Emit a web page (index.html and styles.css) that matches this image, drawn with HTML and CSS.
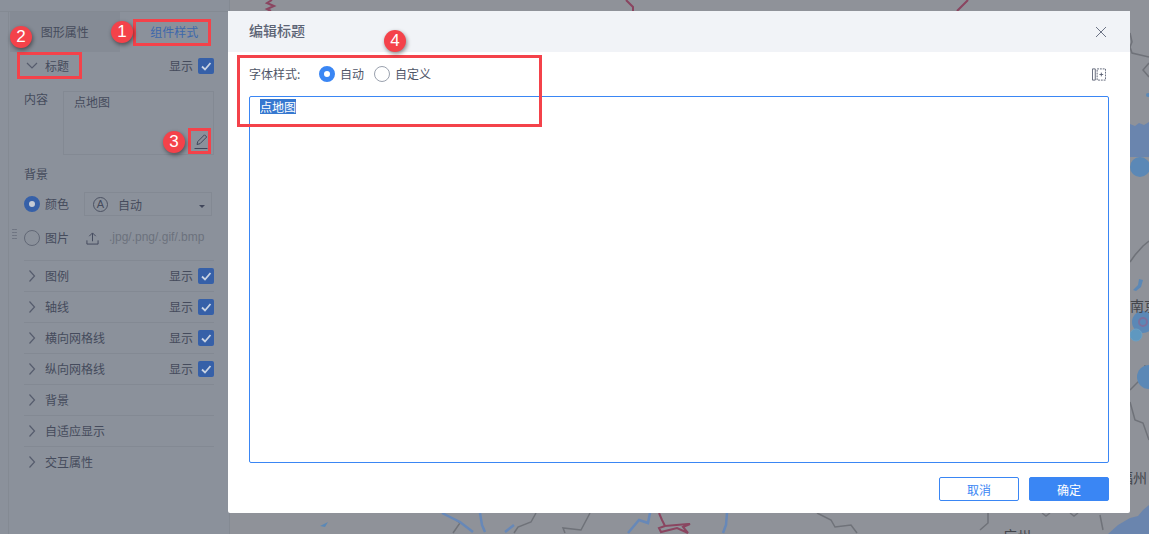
FILE: index.html
```html
<!DOCTYPE html>
<html lang="zh">
<head>
<meta charset="utf-8">
<title>编辑标题</title>
<link rel="stylesheet" href="styles.css">
</head>
<body>
<div class="page">
  <svg class="map" width="1149" height="534" viewBox="0 0 1149 534" fill="none">
    <path class="sea" d="M1130 124l5 2 4 -3 5 2 5 -3v35h-19zM1108 534l10 -9 12 -7 8 -2 5 -6 6 -5v29z"/>
    <g class="border">
      <path d="M1130 33l2 9 -2 5 2 6 17 4M1149 63l-6 7 6 7"/>
      <path d="M1130 262l5 -7 8 -9 6 -5M1130 390l13 -13 2 -12M1130 402l5 18 8 3 6 17"/>
      <path d="M456 520l4 3 -7 10M536 513l-5 9 -13 5 -4 6M590 513l-9 17 -18 -2 2 5M817 513l14 7 4 7 16 -2 6 8M988 513v10l-8 7M1042 513l4 3 4 -3M1070 513l4 3 4 -3M1100 515l3 15"/>
    </g>
    <g class="water">
      <path d="M442 513l18 9 13 10M480 513l2 12 3 7M505 532l9 -7M650 513l-2 10 -9 -3 -11 13M727 513l-1 12 -3 8"/>
    </g>
    <g class="blobs">
      <path d="M320 526l8 -4 -3 5zM1133 290l5 -5 1 -6 4 1 -2 7 -5 4z"/>
      <circle cx="1140" cy="167" r="10"/>
      <circle cx="1143" cy="322" r="11"/>
      <circle cx="1149" cy="377" r="12"/>
      <circle cx="1148" cy="95" r="2"/>
    </g>
    <circle class="blob-small" cx="1136" cy="335" r="6"/>
    <circle class="ring" cx="1143" cy="322" r="4"/>
    <path class="province" d="M272 0l-5 3 7 3 -7 3 4 2M626 0l7 7v4M968 0l-11 11M659 513l3 7 3 6 23 -2 2 0 -7 3 5 6 -11 -5 -16 4 -2 -4 6 -2"/>
    <text class="city" x="1130" y="311">南京</text>
    <text class="city" x="1119" y="483">福州</text>
    <text class="city" x="1003" y="541">广州</text>
  </svg>

  <aside class="panel">
    <div class="panel-top"></div>
    <div class="panel-body">
      <div class="tabs">
        <div class="tab tab-off">图形属性</div>
        <div class="tab tab-on">组件样式</div>
      </div>
      <div class="section-head">
        <svg class="chev" width="12" height="12" viewBox="0 0 12 12"><path d="M1 3l5 5 5 -5"/></svg>
        <span class="sec-name">标题</span>
        <span class="show">显示</span>
        <span class="check"><svg width="16" height="16" viewBox="0 0 16 16"><path d="M4 8.500l3 3 5.500 -6.500"/></svg></span>
      </div>
      <div class="content-row">
        <span class="content-label">内容</span>
        <div class="content-box">点地图
          <svg class="pen" width="14" height="15" viewBox="0 0 14 15"><path d="M3 10.500l.8 -3 6.700 -6.700 2.200 2.200 -6.700 6.700zM.5 14.500h13"/></svg>
        </div>
      </div>
      <div class="bg-title">背景</div>
      <div class="bg-row bg-color">
        <span class="radio radio-on"></span>
        <span class="bg-name">颜色</span>
        <div class="select">
          <span class="a-icon">A</span>
          <span>自动</span>
          <span class="caret"></span>
        </div>
      </div>
      <div class="bg-row bg-image">
        <span class="grip"></span>
        <span class="radio"></span>
        <span class="bg-name">图片</span>
        <svg class="upload" width="13" height="13" viewBox="0 0 14 14"><path d="M7 10V1.500M3.500 4.500L7 1l3.500 3.500M1 9v4h12V9"/></svg>
        <span class="exts">.jpg/.png/.gif/.bmp</span>
      </div>
      <div class="rows">
        <div class="row"><svg class="chev" width="12" height="12" viewBox="0 0 12 12"><path d="M3.500 .5l5 5.500 -5 5.500"/></svg><span class="sec-name">图例</span><span class="show">显示</span><span class="check"><svg width="16" height="16" viewBox="0 0 16 16"><path d="M4 8.500l3 3 5.500 -6.500"/></svg></span></div>
        <div class="row"><svg class="chev" width="12" height="12" viewBox="0 0 12 12"><path d="M3.500 .5l5 5.500 -5 5.500"/></svg><span class="sec-name">轴线</span><span class="show">显示</span><span class="check"><svg width="16" height="16" viewBox="0 0 16 16"><path d="M4 8.500l3 3 5.500 -6.500"/></svg></span></div>
        <div class="row"><svg class="chev" width="12" height="12" viewBox="0 0 12 12"><path d="M3.500 .5l5 5.500 -5 5.500"/></svg><span class="sec-name">横向网格线</span><span class="show">显示</span><span class="check"><svg width="16" height="16" viewBox="0 0 16 16"><path d="M4 8.500l3 3 5.500 -6.500"/></svg></span></div>
        <div class="row"><svg class="chev" width="12" height="12" viewBox="0 0 12 12"><path d="M3.500 .5l5 5.500 -5 5.500"/></svg><span class="sec-name">纵向网格线</span><span class="show">显示</span><span class="check"><svg width="16" height="16" viewBox="0 0 16 16"><path d="M4 8.500l3 3 5.500 -6.500"/></svg></span></div>
        <div class="row"><svg class="chev" width="12" height="12" viewBox="0 0 12 12"><path d="M3.500 .5l5 5.500 -5 5.500"/></svg><span class="sec-name">背景</span></div>
        <div class="row"><svg class="chev" width="12" height="12" viewBox="0 0 12 12"><path d="M3.500 .5l5 5.500 -5 5.500"/></svg><span class="sec-name">自适应显示</span></div>
        <div class="row"><svg class="chev" width="12" height="12" viewBox="0 0 12 12"><path d="M3.500 .5l5 5.500 -5 5.500"/></svg><span class="sec-name">交互属性</span></div>
      </div>
    </div>
  </aside>

  <section class="dialog">
    <header class="dialog-head">
      <span class="dialog-title">编辑标题</span>
      <svg class="close" width="12" height="12" viewBox="0 0 12 12"><path d="M1 1l10 10M11 1L1 11"/></svg>
    </header>
    <div class="dialog-body">
      <div class="font-row">
        <span class="font-label">字体样式:</span>
        <span class="radio-blue"></span><span class="opt">自动</span>
        <span class="radio-plain"></span><span class="opt">自定义</span>
        <svg class="expand" width="14" height="13" viewBox="0 0 15 13"><path d="M.500 .500h3v12h-3z"/><path class="dash" d="M5.500 .500h9v12h-9z"/><path d="M8 6.500h4M10 4.500v4"/></svg>
      </div>
      <div class="editor"><span class="selected">点地图</span></div>
    </div>
    <footer class="dialog-foot">
      <button class="btn btn-ghost">取消</button>
      <button class="btn btn-primary">确定</button>
    </footer>
  </section>

  <div class="mark mark-1"></div>
  <div class="mark mark-2"></div>
  <div class="mark mark-3"></div>
  <div class="mark mark-4"></div>
  <div class="badge badge-1">1</div>
  <div class="badge badge-2">2</div>
  <div class="badge badge-3">3</div>
  <div class="badge badge-4">4</div>
</div>
</body>
</html>
```

FILE: styles.css
```css
* { box-sizing: border-box; }
html, body { margin: 0; padding: 0; }
body {
  font-family: "Noto Sans CJK SC", "Liberation Sans", sans-serif;
  font-size: 12px;
  color: #40465a;
}
.page {
  position: relative;
  width: 1149px;
  height: 534px;
  overflow: hidden;
  background: #8f9299;
}
.map { position: absolute; left: 0; top: 0; }
.border path { stroke: #6f7279; stroke-width: 1.500; }
.water path { stroke: #6788b8; stroke-width: 2.500; }
.blobs path, .blobs circle { fill: #5b88b6; }
.blob-small { fill: #5f98c0; stroke: #6ba0c4; }
.ring { stroke: #7c6f9c; stroke-width: 2; }
.sea { fill: #6a85ae; }
.province { stroke: #8a4560; stroke-width: 2; }
.city { fill: #43464c; font-size: 14px; }

.panel {
  position: absolute;
  left: 0;
  top: 0;
  width: 230px;
  height: 534px;
  background: #8b919b;
  border-right: 1px solid #848a93;
  display: flex;
  flex-direction: column;
}
.panel-top { height: 12px; flex: none; border-bottom: 1px solid #848a93; }
.panel-body { flex: 1; margin-left: 8px; border-left: 1px solid #848a93; }
.tabs { display: flex; height: 40px; }
.tab { display: flex; align-items: center; justify-content: center; width: 110px; padding-bottom: 2px; }
.tab-off { background: #858b95; color: #454b5c; margin-left: 1px; }
.tab-on { color: #3d68ac; }
.section-head, .row {
  display: flex;
  align-items: center;
  margin-left: 15px;
  width: 190px;
  color: #454b5c;
}
.section-head { height: 27px; }
.chev { margin-left: 2px; margin-right: 7px; flex: none; }
.chev path { fill: none; stroke: #565c6d; stroke-width: 1.200; }
.show { margin-left: auto; margin-right: 5px; }
.row .sec-name, .row .show { margin-bottom: 2px; }
.check {
  display: flex;
  width: 16px;
  height: 16px;
  background: #3660a8;
  border-radius: 2px;
  flex: none;
}
.check path { fill: none; stroke: #c9d3e3; stroke-width: 1.800; }
.content-row { display: flex; margin: 12px 0 0 15px; width: 190px; }
.content-label { width: 39px; flex: none; margin-top: -1px; line-height: 17px; color: #454b5c; }
.content-box {
  position: relative;
  width: 151px;
  height: 64px;
  border: 1px solid #838993;
  padding: 1px 10px;
  line-height: 17px;
  color: #454b5c;
}
.pen { position: absolute; right: 5px; bottom: 5px; }
.pen path { fill: none; stroke: #40465a; stroke-width: 1; }
.bg-title { margin: 9px 0 0 15px; height: 20px; line-height: 20px; color: #454b5c; }
.bg-row { position: relative; display: flex; align-items: center; margin-left: 15px; width: 190px; height: 34px; color: #454b5c; }
.bg-color { margin-top: 3px; }
.radio {
  width: 16px;
  height: 16px;
  border-radius: 50%;
  border: 1px solid #626876;
  flex: none;
}
.radio-on { border: 5px solid #3660a8; background: #c5cbd5; }
.bg-name { margin-left: 5px; margin-bottom: 2px; width: 39px; flex: none; }
.select {
  display: flex;
  align-items: center;
  position: relative;
  width: 128px;
  height: 24px;
  border: 1px solid #838993;
  padding-left: 8px;
  gap: 10px;
}
.a-icon {
  width: 15px;
  height: 15px;
  border: 1px solid #4c5263;
  border-radius: 50%;
  text-align: center;
  line-height: 13px;
  font-size: 11px;
  font-family: "Liberation Sans", sans-serif;
}
.caret {
  position: absolute;
  right: 6px;
  top: 12px;
  border: 3px solid transparent;
  border-top-color: #40465a;
}
.grip {
  position: absolute;
  left: -12px;
  top: 7px;
  width: 5px;
  height: 12px;
  background-image: radial-gradient(circle, #6d7380 .8px, transparent 1px);
  background-size: 2.500px 3px;
}
.upload { flex: none; margin-left: 2px; }
.upload path { fill: none; stroke: #40465a; stroke-width: 1; }
.exts { margin-left: 10px; margin-bottom: 2px; color: #6b717d; white-space: nowrap; font-family: "Liberation Sans", sans-serif; }
.rows { margin-top: 5px; }
.row { height: 31px; border-top: 1px solid #838993; }

.dialog {
  position: absolute;
  left: 228px;
  top: 11px;
  width: 902px;
  height: 502px;
  background: #fff;
  display: flex;
  flex-direction: column;
  border-radius: 2px;
}
.dialog-head {
  display: flex;
  align-items: center;
  justify-content: space-between;
  height: 41px;
  background: #f1f3f7;
  padding: 0 23px 0 21px;
  font-size: 14px;
  color: #5c6375;
  flex: none;
}
.dialog-title { font-weight: 500; margin-bottom: 3px; }
.close path { stroke: #6c7385; stroke-width: 1; fill: none; }
.dialog-body { flex: 1; padding: 0 21px; display: flex; flex-direction: column; }
.font-row { display: flex; align-items: center; height: 44px; color: #4f5668; }
.font-label { width: 70px; margin-bottom: 2px; }
.opt { margin-left: 5px; margin-bottom: 2px; width: 29px; }
.radio-blue, .radio-plain { width: 16px; height: 16px; border-radius: 50%; flex: none; }
.radio-blue { border: 5px solid #3a86f4; background: #fff; }
.radio-plain { border: 1px solid #9aa1ae; margin-left: 5px; }
.opt:last-of-type { width: auto; }
.expand { margin-left: auto; margin-right: 3px; }
.expand path { fill: none; stroke: #5c6375; stroke-width: 1; }
.expand .dash { stroke-dasharray: 2 1; }
.editor {
  height: 367px;
  border: 1px solid #3a86f4;
  border-radius: 2px;
  padding: 1px 10px;
  line-height: 17px;
  color: #fff;
}
.selected { background: #3678d0; color: #fff; display: inline-block; line-height: 15px; }
.dialog-foot { display: flex; justify-content: flex-end; gap: 10px; padding: 0 21px 12px 0; }
.btn {
  width: 80px;
  height: 24px;
  font: inherit;
  border-radius: 2px;
  padding: 0;
}
.btn-ghost { background: #fff; border: 1px solid #3a86f4; color: #3a86f4; }
.btn-primary { background: #3a86f4; border: 1px solid #3a86f4; color: #fff; }

.mark { position: absolute; border: 3px solid #f4424a; }
.mark-1 { left: 133px; top: 19px; width: 78px; height: 27px; }
.mark-2 { left: 17px; top: 52px; width: 65px; height: 27px; }
.mark-3 { left: 188px; top: 128px; width: 23px; height: 26px; }
.mark-4 { left: 237px; top: 55px; width: 305px; height: 72px; }
.badge {
  position: absolute;
  width: 22px;
  height: 22px;
  border-radius: 50%;
  background: #f4424a;
  color: #fff;
  font-family: "Liberation Sans", sans-serif;
  font-size: 17px;
  line-height: 22px;
  text-align: center;
  box-shadow: 1px 2px 4px rgba(0,0,0,.45);
}
.badge-1 { left: 111px; top: 21px; }
.badge-2 { left: 10px; top: 26px; }
.badge-3 { left: 163px; top: 131px; }
.badge-4 { left: 384px; top: 30px; }
```
